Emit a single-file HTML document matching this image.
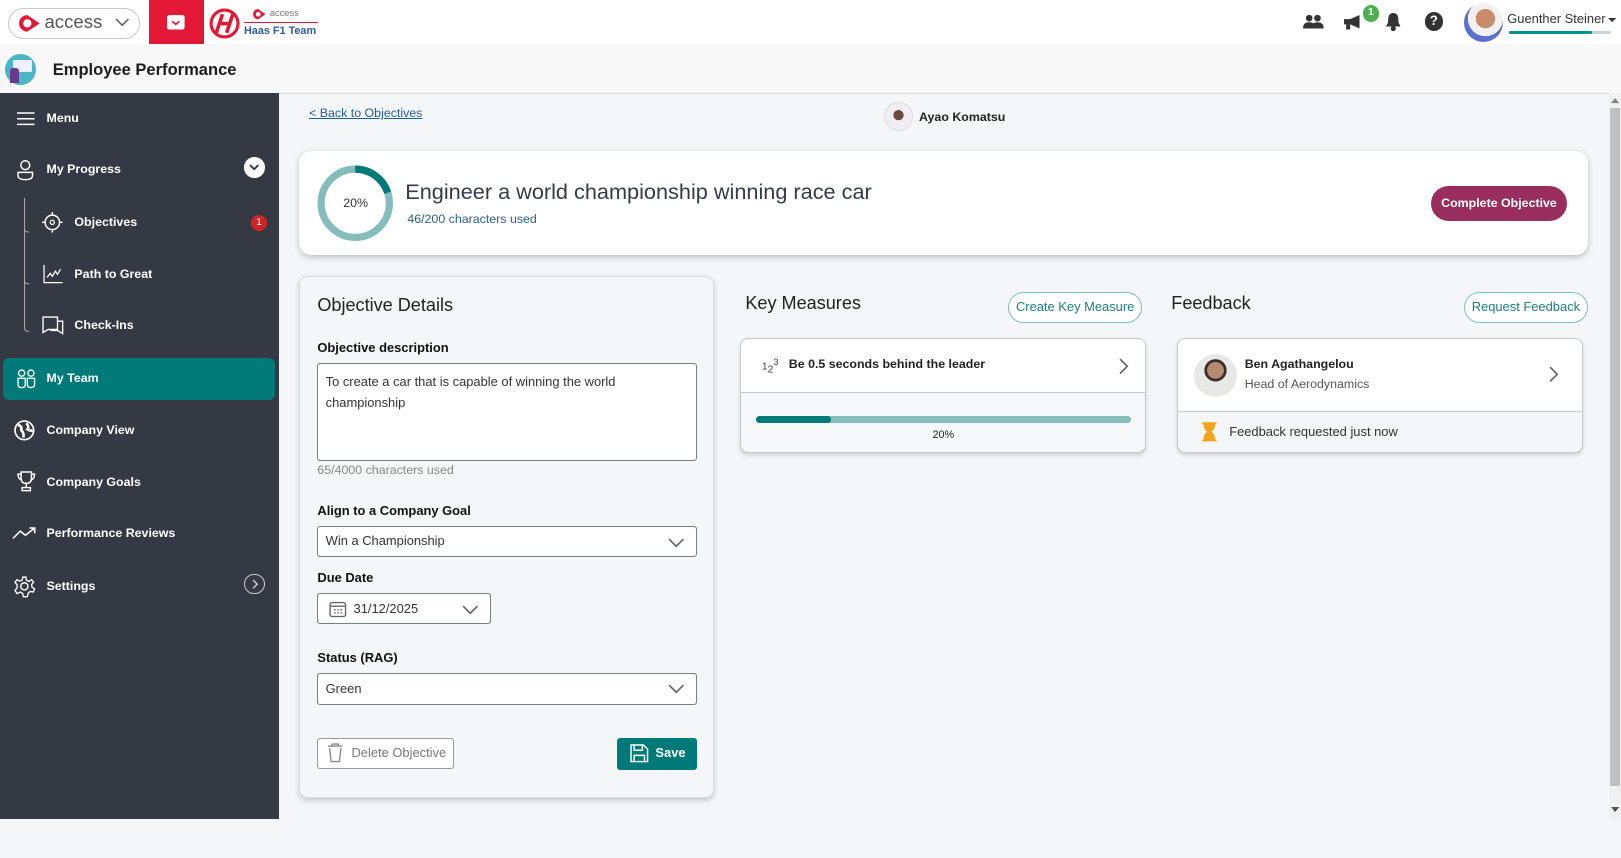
<!DOCTYPE html>
<html><head><meta charset="utf-8">
<style>
html,body{margin:0;padding:0;}
html{zoom:1.0338;}
body{width:1568px;height:830px;position:relative;overflow:hidden;background:#f5f6f8;font-family:"Liberation Sans",Arial,sans-serif;color:#222;}
.a{position:absolute;}
.top{left:0;top:0;width:1568px;height:43px;background:#fff;}
.hdr{left:0;top:43px;width:1568px;height:47px;background:#f8f8f8;border-bottom:1px solid #dcdcdc;}
.side{left:0;top:90px;width:270px;height:702px;background:#353944;}
.si{position:absolute;color:#fff;font-size:12px;font-weight:bold;}
.card{background:#fff;border-radius:12px;box-shadow:0 2px 6px rgba(0,0,0,.22);}
.lbl{font-size:12.5px;font-weight:bold;color:#111;}
.inp{background:#fff;border:1px solid #7a7f87;border-radius:3px;box-sizing:border-box;}
.pill{border:1px solid #7fbfbd;border-radius:16px;color:#1b7f82;font-size:12.5px;text-align:center;box-sizing:border-box;background:#fff;}
svg{position:absolute;overflow:visible;}
</style></head><body>
<div class="a top"></div>
<div class="a" style="left:8px;top:8px;width:127px;height:30px;border:1px solid #c8c8c8;border-radius:15px;box-sizing:border-box;"></div>
<svg style="left:16px;top:13px" width="24" height="20"><path d="M10 2 A8 8 0 1 0 10 18 L22 10 Z" fill="#e31837"/><circle cx="10" cy="10" r="4" fill="#fff"/></svg>
<div class="a" style="left:43px;top:11px;font-size:18px;color:#555;">access</div>
<svg style="left:111px;top:17px" width="14" height="9"><path d="M1 1 L7 7 L13 1" stroke="#666" stroke-width="1.6" fill="none"/></svg>
<div class="a" style="left:144px;top:0;width:53px;height:43px;background:#e31837;"></div>
<svg style="left:162px;top:13px" width="17" height="17"><rect x="0" y="2" width="17" height="14" rx="2" fill="#fff"/><path d="M5 8 L8.5 11 L12 8" stroke="#e31837" stroke-width="1.6" fill="none"/></svg>
<svg style="left:201px;top:8px" width="32" height="30"><circle cx="16" cy="15" r="13" fill="none" stroke="#e31837" stroke-width="3"/><path d="M8 24 L14 6 M18 24 L24 6 M10 15 L22 15" stroke="#e31837" stroke-width="3.5"/></svg>
<svg style="left:244px;top:8px" width="14" height="12"><path d="M6 1 A5 5 0 1 0 6 11 L13 6 Z" fill="#e31837"/><circle cx="6" cy="6" r="2.3" fill="#fff"/></svg>
<div class="a" style="left:261px;top:8px;font-size:9px;color:#777;">access</div>
<div class="a" style="left:236px;top:21px;width:72px;height:1px;background:#e31837;"></div>
<div class="a" style="left:236px;top:24px;font-size:10.5px;font-weight:bold;color:#2e5a9e;">Haas F1 Team</div>
<svg style="left:1260px;top:14px" width="20" height="14"><circle cx="6" cy="4" r="3.2" fill="#333"/><circle cx="14" cy="4" r="3.2" fill="#333"/><path d="M0 14 Q0 8 6 8 Q12 8 12 14Z M8 14 Q8 8 14 8 Q20 8 20 14Z" fill="#333"/></svg>
<svg style="left:1299px;top:14px" width="20" height="16"><path d="M1 5 L7 5 L16 1 L16 14 L7 10 L1 10 Z" fill="#333"/><rect x="3" y="10" width="4" height="5" fill="#333"/></svg>
<div class="a" style="left:1318px;top:5px;width:16px;height:16px;border-radius:8px;background:#4caf50;color:#fff;font-size:10px;font-weight:bold;text-align:center;line-height:16px;">1</div>
<svg style="left:1340px;top:12px" width="16" height="19"><path d="M8 1 C3 1 3 6 3 10 L1 14 L15 14 L13 10 C13 6 13 1 8 1Z" fill="#333"/><circle cx="8" cy="16" r="2.5" fill="#333"/></svg>
<div class="a" style="left:1378px;top:12px;width:18px;height:18px;border-radius:9px;background:#333;color:#fff;font-size:13px;font-weight:bold;text-align:center;line-height:18px;">?</div>
<div class="a" style="left:1416px;top:3px;width:38px;height:38px;border-radius:19px;background:radial-gradient(circle at 55% 40%,#c88c6c 0 30%,#f3f0f2 31% 55%,#5a6fd0 56%);"></div>
<div class="a" style="left:1458px;top:11px;font-size:12.5px;color:#333;">Guenther Steiner</div>
<svg style="left:1555px;top:17px" width="8" height="5"><path d="M0 0 L8 0 L4 4Z" fill="#333"/></svg>
<div class="a" style="left:1460px;top:30px;width:98px;height:3px;background:#ccd3d8;border-radius:2px;"></div>
<div class="a" style="left:1460px;top:30px;width:80px;height:3px;background:#00958f;border-radius:2px;"></div>
<div class="a hdr"></div>
<div class="a" style="left:5px;top:52px;width:30px;height:30px;border-radius:15px;background:#4bb6c5;"></div>
<div class="a" style="left:13px;top:58px;width:18px;height:12px;background:#eef;border-radius:1px;"></div>
<div class="a" style="left:10px;top:66px;width:8px;height:14px;background:#6a3a8a;border-radius:3px 3px 0 0;"></div>
<div class="a" style="left:51px;top:58px;font-size:16px;font-weight:bold;color:#1c1c1c;">Employee Performance</div>
<div class="a side"></div>
<div class="a" style="left:3px;top:346px;width:263px;height:41px;background:#007a78;border-radius:6px;"></div>
<svg style="left:16px;top:108px" width="17" height="13"><path d="M0 1H17M0 6.5H17M0 12H17" stroke="#fff" stroke-width="1.5"/></svg>
<div class="si" style="left:45px;top:107px;">Menu</div>
<svg style="left:16px;top:155px" width="16" height="20"><circle cx="8" cy="5" r="4.3" fill="none" stroke="#fff" stroke-width="1.4"/><path d="M1 12 H15 V15 Q15 19 8 19 Q1 19 1 15Z" fill="none" stroke="#fff" stroke-width="1.4"/></svg>
<div class="si" style="left:45px;top:157px;">My Progress</div>
<div class="a" style="left:236px;top:152px;width:20px;height:20px;border-radius:10px;background:#fff;"></div>
<svg style="left:241px;top:159px" width="10" height="6"><path d="M1 1 L5 5 L9 1" stroke="#353944" stroke-width="1.8" fill="none"/></svg>
<svg style="left:22px;top:192px" width="12" height="130"><path d="M1.5 0 V126 Q1.5 129 6 129" stroke="#aaa" stroke-width="1" fill="none"/><path d="M1.5 80 Q1.5 83 6 83 M1.5 30 Q1.5 33 6 33" stroke="#aaa" stroke-width="1" fill="none"/></svg>
<svg style="left:41px;top:205px" width="20" height="20"><circle cx="10" cy="10" r="7" fill="none" stroke="#fff" stroke-width="1.4"/><circle cx="10" cy="10" r="2" fill="none" stroke="#fff" stroke-width="1.2"/><path d="M10 0V3M10 17V20M0 10H3M17 10H20" stroke="#fff" stroke-width="1.4"/></svg>
<div class="si" style="left:72px;top:208px;">Objectives</div>
<div class="a" style="left:243px;top:208px;width:15px;height:15px;border-radius:8px;background:#d32222;color:#fff;font-size:10px;text-align:center;line-height:15px;">1</div>
<svg style="left:42px;top:256px" width="19" height="18"><path d="M1 0V17H19" stroke="#fff" stroke-width="1.2" fill="none"/><path d="M4 12 L7 8 L9 11 L12 6 L14 9 L17 4" stroke="#fff" stroke-width="1.2" fill="none"/></svg>
<div class="si" style="left:72px;top:258px;">Path to Great</div>
<svg style="left:41px;top:306px" width="21" height="20"><path d="M1 1H15V13H6L1 16Z" fill="none" stroke="#fff" stroke-width="1.3"/><path d="M15 5H20V17L15 14H8" fill="none" stroke="#fff" stroke-width="1.3"/></svg>
<div class="si" style="left:72px;top:308px;">Check-Ins</div>
<svg style="left:16px;top:357px" width="18" height="19"><circle cx="4.5" cy="4" r="3" fill="none" stroke="#fff" stroke-width="1.3"/><circle cx="13.5" cy="4" r="3" fill="none" stroke="#fff" stroke-width="1.3"/><path d="M1 9H8V15Q8 18 4.5 18Q1 18 1 15Z M10 9H17V15Q17 18 13.5 18Q10 18 10 15Z" fill="none" stroke="#fff" stroke-width="1.3"/></svg>
<div class="si" style="left:45px;top:359px;">My Team</div>
<svg style="left:14px;top:406px" width="20" height="20"><circle cx="10" cy="10" r="9" fill="none" stroke="#fff" stroke-width="1.6"/><path d="M4 5 Q8 6 7 10 Q10 12 9 17 M12 3 Q15 7 13 9 Q16 11 18 10" stroke="#fff" stroke-width="2.5" fill="none"/></svg>
<div class="si" style="left:45px;top:409px;">Company View</div>
<svg style="left:17px;top:456px" width="16" height="20"><path d="M3 1H13V7Q13 12 8 12Q3 12 3 7Z M3 3H0Q0 8 4 9 M13 3H16Q16 8 12 9 M8 12V16 M4 16H12V19H4Z" fill="none" stroke="#fff" stroke-width="1.4"/></svg>
<div class="si" style="left:45px;top:459px;">Company Goals</div>
<svg style="left:13px;top:510px" width="23" height="12"><path d="M0 11 L7 4 L12 8 L21 1 M16 1H21V6" stroke="#fff" stroke-width="1.5" fill="none"/></svg>
<div class="si" style="left:45px;top:509px;">Performance Reviews</div>
<svg style="left:14px;top:557px" width="20" height="20"><circle cx="10" cy="10" r="3.5" fill="none" stroke="#fff" stroke-width="1.4"/><path d="M8.5 1H11.5L12 4L14.5 5.3L17 3.5L19 6L17 8.3L17.5 11L20 12.5L18.5 15.5L15.5 15L13.5 17L13 20H9L8.5 17L6 15.5L3 17L1 14L3 11.5V8.5L1 6L3 3.5L5.7 5L8 3.8Z" fill="none" stroke="#fff" stroke-width="1.3"/></svg>
<div class="si" style="left:45px;top:560px;">Settings</div>
<div class="a" style="left:236px;top:555px;width:18px;height:18px;border-radius:10px;border:1.3px solid #ccc;"></div>
<svg style="left:244px;top:560px" width="6" height="10"><path d="M1 1 L5 5 L1 9" stroke="#ccc" stroke-width="1.4" fill="none"/></svg>
<div class="a" style="left:0;top:792px;width:1568px;height:38px;background:#f5f6f8;"></div>
<div class="a" style="left:1556px;top:90px;width:12px;height:702px;background:#f1f1f1;"></div>
<div class="a" style="left:1557px;top:104px;width:10px;height:656px;background:#c1c1c1;"></div>
<svg style="left:1558px;top:95px" width="8" height="5"><path d="M0 5 L4 0 L8 5Z" fill="#888"/></svg>
<svg style="left:1558px;top:781px" width="8" height="5"><path d="M0 0 L8 0 L4 5Z" fill="#555"/></svg>
<div class="a" style="left:299px;top:103px;font-size:12px;color:#1f5e9c;text-decoration:underline;">&lt; Back to Objectives</div>
<div class="a" style="left:855px;top:99px;width:28px;height:28px;border-radius:14px;background:radial-gradient(circle at 50% 45%,#6b4a3a 0 25%,#f0eef2 26%);border:1px solid #ddd;box-sizing:border-box;"></div>
<div class="a" style="left:889px;top:106px;font-size:12px;font-weight:bold;">Ayao Komatsu</div>
<div class="a card" style="left:289px;top:146px;width:1247px;height:101px;"></div>
<svg style="left:307px;top:160px" width="74" height="74"><circle cx="37" cy="37" r="33" fill="none" stroke="#85bdbb" stroke-width="7"/><path d="M37 4 A33 33 0 0 1 68.4 26.8" fill="none" stroke="#007a78" stroke-width="7"/></svg>
<div class="a" style="left:307px;top:190px;width:74px;text-align:center;font-size:12px;color:#333;">20%</div>
<div class="a" style="left:392px;top:173px;font-size:21px;color:#353a4a;">Engineer a world championship winning race car</div>
<div class="a" style="left:394px;top:205px;font-size:12px;color:#2c5f8a;">46/200 characters used</div>
<div class="a" style="left:1384px;top:180px;width:132px;height:34px;border-radius:17px;background:#992d5e;color:#fff;font-size:12px;font-weight:bold;text-align:center;line-height:34px;">Complete Objective</div>
<div class="a" style="left:289px;top:267px;width:402px;height:505px;border:1px solid #dedede;border-radius:8px;box-sizing:border-box;box-shadow:0 2px 5px rgba(0,0,0,.18);background:#f5f6f8;"></div>
<div class="a" style="left:307px;top:285px;font-size:17.5px;color:#222;">Objective Details</div>
<div class="a lbl" style="left:307px;top:329px;">Objective description</div>
<div class="a inp" style="left:307px;top:351px;width:367px;height:95px;"></div>
<div class="a" style="left:315px;top:360px;width:340px;font-size:12.5px;line-height:20px;color:#333;">To create a car that is capable of winning the world championship</div>
<div class="a" style="left:307px;top:448px;font-size:12px;color:#888;">65/4000 characters used</div>
<div class="a lbl" style="left:307px;top:487px;">Align to a Company Goal</div>
<div class="a inp" style="left:307px;top:509px;width:367px;height:30px;"></div>
<div class="a" style="left:315px;top:516px;font-size:12.5px;color:#333;">Win a Championship</div>
<svg style="left:646px;top:520px" width="16" height="9"><path d="M1 1 L8 8 L15 1" stroke="#666" stroke-width="1.6" fill="none"/></svg>
<div class="a lbl" style="left:307px;top:551px;">Due Date</div>
<div class="a inp" style="left:307px;top:574px;width:168px;height:30px;"></div>
<svg style="left:318px;top:581px" width="17" height="16"><rect x="1" y="1.5" width="15" height="13.5" rx="2" fill="none" stroke="#666" stroke-width="1.3"/><path d="M1 5H16" stroke="#666" stroke-width="1.3"/><path d="M5 8.5h1.5M8 8.5h1.5M11 8.5h1.5M5 11.5h1.5M8 11.5h1.5M11 11.5h1.5" stroke="#666" stroke-width="1.3"/></svg>
<div class="a" style="left:342px;top:581px;font-size:12.5px;color:#333;">31/12/2025</div>
<svg style="left:447px;top:585px" width="16" height="9"><path d="M1 1 L8 8 L15 1" stroke="#666" stroke-width="1.6" fill="none"/></svg>
<div class="a lbl" style="left:307px;top:629px;">Status (RAG)</div>
<div class="a inp" style="left:307px;top:651px;width:367px;height:31px;"></div>
<div class="a" style="left:315px;top:659px;font-size:12.5px;color:#333;">Green</div>
<svg style="left:646px;top:662px" width="16" height="9"><path d="M1 1 L8 8 L15 1" stroke="#666" stroke-width="1.6" fill="none"/></svg>
<div class="a inp" style="left:307px;top:714px;width:132px;height:30px;border-color:#999;"></div>
<svg style="left:316px;top:719px" width="16" height="20"><path d="M1 3H15 M5 3V1H11V3 M2.5 5L4 18H12L13.5 5" fill="none" stroke="#888" stroke-width="1.3"/></svg>
<div class="a" style="left:340px;top:721px;font-size:12.5px;color:#777;">Delete Objective</div>
<div class="a" style="left:597px;top:714px;width:77px;height:31px;background:#007a78;border-radius:3px;"></div>
<svg style="left:609px;top:720px" width="18" height="18"><path d="M1 1H13L17 5V17H1Z" fill="none" stroke="#fff" stroke-width="1.4"/><path d="M4 1V6H12V1 M4 17V11H14V17" fill="none" stroke="#fff" stroke-width="1.4"/></svg>
<div class="a" style="left:634px;top:721px;font-size:12.5px;font-weight:bold;color:#fff;">Save</div>
<div class="a" style="left:721px;top:283px;font-size:17.5px;color:#222;">Key Measures</div>
<div class="a pill" style="left:975px;top:282px;width:130px;height:30px;line-height:28px;">Create Key Measure</div>
<div class="a" style="left:716px;top:327px;width:393px;height:111px;background:#f7f8f9;border:1px solid #c9c9c9;border-radius:8px;box-sizing:border-box;box-shadow:0 2px 4px rgba(0,0,0,.15);overflow:hidden;">
 <div style="height:51px;background:#fff;border-bottom:1px solid #c9c9c9;"></div>
</div>
<div class="a" style="left:737px;top:345px;font-size:10px;color:#444;">1<sub style="font-size:10px">2</sub><sup style="font-size:9px">3</sup></div>
<div class="a" style="left:763px;top:345px;font-size:12px;font-weight:bold;color:#222;">Be 0.5 seconds behind the leader</div>
<svg style="left:1082px;top:346px" width="9" height="16"><path d="M1 1 L8 8 L1 15" stroke="#666" stroke-width="1.6" fill="none"/></svg>
<div class="a" style="left:731px;top:402px;width:363px;height:7px;background:#85bdbb;border-radius:4px;"></div>
<div class="a" style="left:731px;top:402px;width:73px;height:7px;background:#007a78;border-radius:4px;"></div>
<div class="a" style="left:731px;top:415px;width:363px;text-align:center;font-size:10.5px;color:#222;">20%</div>
<div class="a" style="left:1133px;top:283px;font-size:17.5px;color:#222;">Feedback</div>
<div class="a pill" style="left:1416px;top:282px;width:120px;height:30px;line-height:28px;">Request Feedback</div>
<div class="a" style="left:1139px;top:327px;width:392px;height:111px;background:#f5f6f8;border:1px solid #c9c9c9;border-radius:8px;box-sizing:border-box;box-shadow:0 2px 4px rgba(0,0,0,.15);overflow:hidden;">
 <div style="height:70px;background:#fff;border-bottom:1px solid #c9c9c9;"></div>
</div>
<div class="a" style="left:1155px;top:342px;width:42px;height:42px;border-radius:21px;background:radial-gradient(circle at 50% 38%,#b58a72 0 24%,#3a2e28 25% 32%,#e8e8e6 33%);"></div>
<div class="a" style="left:1204px;top:345px;font-size:12px;font-weight:bold;color:#222;">Ben Agathangelou</div>
<div class="a" style="left:1204px;top:365px;font-size:12px;color:#555;">Head of Aerodynamics</div>
<svg style="left:1498px;top:354px" width="9" height="16"><path d="M1 1 L8 8 L1 15" stroke="#666" stroke-width="1.6" fill="none"/></svg>
<svg style="left:1162px;top:408px" width="16" height="19"><path d="M1 1H15 M1 18H15 M3 1 Q3 8 8 9.5 Q13 8 13 1 M3 18 Q3 11 8 9.5 Q13 11 13 18Z" fill="#f4a31a" stroke="#f4a31a" stroke-width="1.5"/></svg>
<div class="a" style="left:1189px;top:410px;font-size:12.5px;color:#333;">Feedback requested just now</div>
</body></html>
